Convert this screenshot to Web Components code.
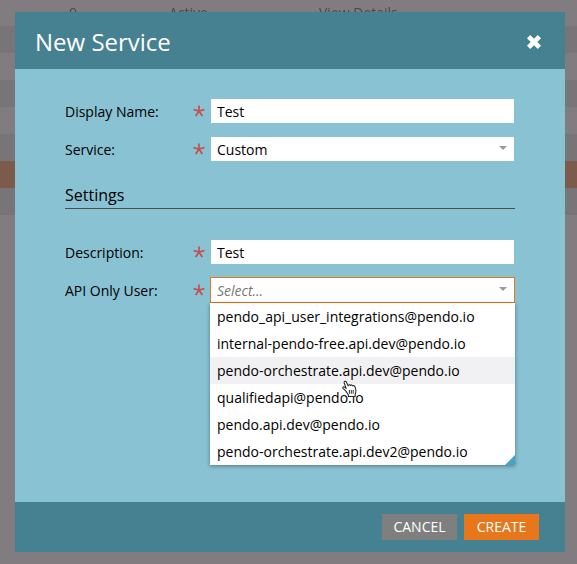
<!DOCTYPE html>
<html lang="en">
<head>
<meta charset="utf-8">
<meta name="viewport" content="width=device-width, initial-scale=1">
<title>New Service</title>
<style>
  body {
    margin: 0;
    background: #807c7f;
    color: #000;
    font: 14px/20px "Open Sans", "Noto Sans", sans-serif;
    overflow: hidden;
  }
</style>
</head>
<body>
<service-table></service-table>
<modal-dialog heading="New Service">
  <text-field label="Display Name:" value="Test"></text-field>
  <select-field label="Service:" value="Custom"></select-field>
  <form-section heading="Settings">
    <text-field label="Description:" value="Test"></text-field>
    <select-field label="API Only User:" placeholder="Select..." open>
      <option-item>pendo_api_user_integrations@pendo.io</option-item>
      <option-item>internal-pendo-free.api.dev@pendo.io</option-item>
      <option-item active>pendo-orchestrate.api.dev@pendo.io</option-item>
      <option-item>qualifiedapi@pendo.io</option-item>
      <option-item>pendo.api.dev@pendo.io</option-item>
      <option-item>pendo-orchestrate.api.dev2@pendo.io</option-item>
    </select-field>
  </form-section>
  <push-button slot="actions">CANCEL</push-button>
  <push-button slot="actions" primary>CREATE</push-button>
</modal-dialog>

<script>
// Shared by the text and select fields
const fieldStyles = `
  :host {
    display: grid;
    grid-template-columns: 128px 17px minmax(0, 1fr);
    align-items: center;
  }
  label {
    padding-top: 2px;
  }
  .star {
    width: 12px;
    height: 12px;
    stroke: #c44f50;
    stroke-width: 1.7;
  }
  .control {
    position: relative;
    min-width: 0;
  }
  input, select {
    display: block;
    box-sizing: border-box;
    width: 100%;
    height: 26px;
    margin: 0;
    padding: 0 6px;
    border: 1px solid transparent;
    border-radius: 0;
    outline: none;
    background: #fff;
    background-clip: padding-box;
    color: inherit;
    font: inherit;
  }
`;

const star = `
  <svg class="star" viewBox="0 0 12 12" aria-hidden="true">
    <path d="M6 6V.5M6 6L.6 4.6M6 6L11.4 4.6M6 6L2.7 11M6 6L9.3 11" fill="none"/>
  </svg>
`;

// Page behind the dialog
class ServiceTable extends HTMLElement {
  connectedCallback() {
    this.attachShadow({ mode: 'open' });
    this.shadowRoot.innerHTML = `
      <style>
        :host {
          display: block;
          position: fixed;
          top: -1px;
          left: 0;
          right: 0;
        }
        table {
          width: 100%;
          border-collapse: collapse;
          table-layout: fixed;
          color: #4c494b;
        }
        td {
          height: 27px;
          padding: 0;
          line-height: 27px;
        }
        td:first-child { width: 69px; }
        td:nth-child(2) { width: 100px; }
        td:nth-child(3) { width: 150px; }
        tr:nth-child(even) { background: #787578; }
        tr.selected { background: #7d5b4b; }
      </style>
      <table>
        <tr><td></td><td>0</td><td>Active</td><td>View Details</td></tr>
        <tr><td colspan="4"></td></tr>
        <tr><td colspan="4"></td></tr>
        <tr><td colspan="4"></td></tr>
        <tr><td colspan="4"></td></tr>
        <tr><td colspan="4"></td></tr>
        <tr class="selected"><td colspan="4"></td></tr>
        <tr><td colspan="4"></td></tr>
      </table>
    `;
  }
}

class ModalDialog extends HTMLElement {
  connectedCallback() {
    this.attachShadow({ mode: 'open' });
    this.shadowRoot.innerHTML = `
      <style>
        :host {
          display: flex;
          box-sizing: border-box;
          min-height: 100vh;
          padding: 12px 12px 12px 15px;
          position: relative;
        }
        section {
          flex: 1;
          display: flex;
          flex-direction: column;
          min-width: 0;
          background: #89c2d3;
        }
        header {
          display: flex;
          align-items: center;
          justify-content: space-between;
          padding: 13px 20px 11px;
          background: #468191;
          color: #fff;
        }
        h1 {
          margin: 0;
          font-size: 24px;
          font-weight: 400;
          line-height: 33px;
        }
        .close {
          display: flex;
          padding: 3px;
          border: 0;
          background: none;
          color: inherit;
          cursor: pointer;
        }
        .close svg {
          width: 16px;
          height: 16px;
        }
        .body {
          flex: 1;
          display: flex;
          flex-direction: column;
          gap: 12px;
          padding: 29px 50px;
        }
        footer {
          display: flex;
          justify-content: flex-end;
          gap: 7px;
          padding: 12px 26px;
          background: #468191;
        }
      </style>
      <section role="dialog" aria-labelledby="title">
        <header>
          <h1 id="title">${this.getAttribute('heading')}</h1>
          <button class="close" type="button" aria-label="Close">
            <svg viewBox="0 0 16 16" aria-hidden="true">
              <path d="M2.6 2.6L13.4 13.4M13.4 2.6L2.6 13.4" fill="none" stroke="currentColor" stroke-width="4.6"/>
            </svg>
          </button>
        </header>
        <div class="body"><slot></slot></div>
        <footer><slot name="actions"></slot></footer>
      </section>
    `;
    this.shadowRoot.querySelector('.close').addEventListener('click', () => this.remove());
  }
}

class FormSection extends HTMLElement {
  connectedCallback() {
    this.attachShadow({ mode: 'open' });
    this.shadowRoot.innerHTML = `
      <style>
        :host {
          display: flex;
          flex-direction: column;
          gap: 12px;
          padding-top: 8px;
        }
        h2 {
          margin: 0 0 18px;
          border-bottom: 1px solid #4c4c4c;
          font-size: 16px;
          font-weight: 400;
          line-height: 26px;
        }
      </style>
      <h2>${this.getAttribute('heading')}</h2>
      <slot></slot>
    `;
  }
}

class TextField extends HTMLElement {
  connectedCallback() {
    this.attachShadow({ mode: 'open' });
    this.shadowRoot.innerHTML = `
      <style>${fieldStyles}</style>
      <label for="field">${this.getAttribute('label')}</label>
      ${star}
      <div class="control">
        <input id="field" type="text" value="${this.getAttribute('value') || ''}" required>
      </div>
    `;
  }
}

class SelectField extends HTMLElement {
  connectedCallback() {
    const text = this.getAttribute('value') || this.getAttribute('placeholder');
    this.attachShadow({ mode: 'open' });
    this.shadowRoot.innerHTML = `
      <style>
        ${fieldStyles}
        select {
          appearance: none;
          padding-top: 2px;
          padding-right: 24px;
        }
        :host([placeholder]) select {
          color: #777;
          font-style: italic;
        }
        :host([open]) select {
          border-color: #e8761a;
        }
        .arrow {
          position: absolute;
          top: 10px;
          right: 8px;
          width: 8px;
          height: 4px;
          fill: #999;
          pointer-events: none;
        }
        .menu {
          display: none;
          position: absolute;
          top: 100%;
          left: 0;
          right: 0;
          background: #fff;
          box-shadow: 0 1px 4px rgba(0, 0, 0, 0.4);
        }
        :host([open]) .menu {
          display: block;
        }
        .grip {
          position: absolute;
          right: 0;
          bottom: 0;
          width: 10px;
          height: 10px;
          fill: #4aa3c7;
        }
      </style>
      <label for="field">${this.getAttribute('label')}</label>
      ${star}
      <div class="control">
        <select id="field" required><option>${text}</option></select>
        <svg class="arrow" viewBox="0 0 8 4" aria-hidden="true"><path d="M0 0H8L4 4Z"/></svg>
        <div class="menu" role="listbox">
          <slot></slot>
          <svg class="grip" viewBox="0 0 10 10" aria-hidden="true"><path d="M10 0V10H0Z"/></svg>
        </div>
      </div>
    `;
  }
}

class OptionItem extends HTMLElement {
  connectedCallback() {
    this.setAttribute('role', 'option');
    this.attachShadow({ mode: 'open' });
    this.shadowRoot.innerHTML = `
      <style>
        :host {
          display: block;
          position: relative;
          padding: 0 7px;
          line-height: 27px;
          cursor: pointer;
        }
        :host([active]) {
          z-index: 1;
          background: #f1f1f3;
        }
        /* hand pointer over the highlighted option */
        .pointer {
          display: none;
          position: absolute;
          top: 23px;
          left: 131px;
          width: 17px;
          height: 18px;
        }
        :host([active]) .pointer {
          display: block;
        }
      </style>
      <slot></slot>
      <svg class="pointer" viewBox="0 0 17 19" aria-hidden="true">
        <path d="M4.5 11.5L2 9.2C.6 8 1.7 6.7 3.2 7.5L5 8.8L2.9 3.2C2.3 1.3 4.4.5 5.2 2.2L7.1 6.2C7.2 4.8 9 4.7 9.5 6C9.9 4.8 11.5 4.9 11.9 6.3C12.8 5.4 14 6 14.3 7.2L15.2 10.5C15.6 12.5 14.9 14 14.5 15.2V17.5H7.3V15.5Z" fill="#fff" stroke="#222" stroke-width="1.1" stroke-linejoin="round"/>
        <path d="M8.4 10.5V14.5M10.4 10.5V14.5M12.4 10.5V14.5" stroke="#222" stroke-width="1" fill="none"/>
      </svg>
    `;
  }
}

class PushButton extends HTMLElement {
  connectedCallback() {
    this.attachShadow({ mode: 'open' });
    this.shadowRoot.innerHTML = `
      <style>
        :host {
          display: block;
        }
        button {
          display: block;
          min-width: 75px;
          height: 26px;
          padding: 0 11px;
          border: 0;
          background: #7f7f7f;
          color: #fff;
          font: inherit;
          cursor: pointer;
        }
        :host([primary]) button {
          background: #e8761a;
        }
      </style>
      <button type="button"><slot></slot></button>
    `;
  }
}

customElements.define('service-table', ServiceTable);
customElements.define('modal-dialog', ModalDialog);
customElements.define('form-section', FormSection);
customElements.define('text-field', TextField);
customElements.define('select-field', SelectField);
customElements.define('option-item', OptionItem);
customElements.define('push-button', PushButton);
</script>
</body>
</html>
